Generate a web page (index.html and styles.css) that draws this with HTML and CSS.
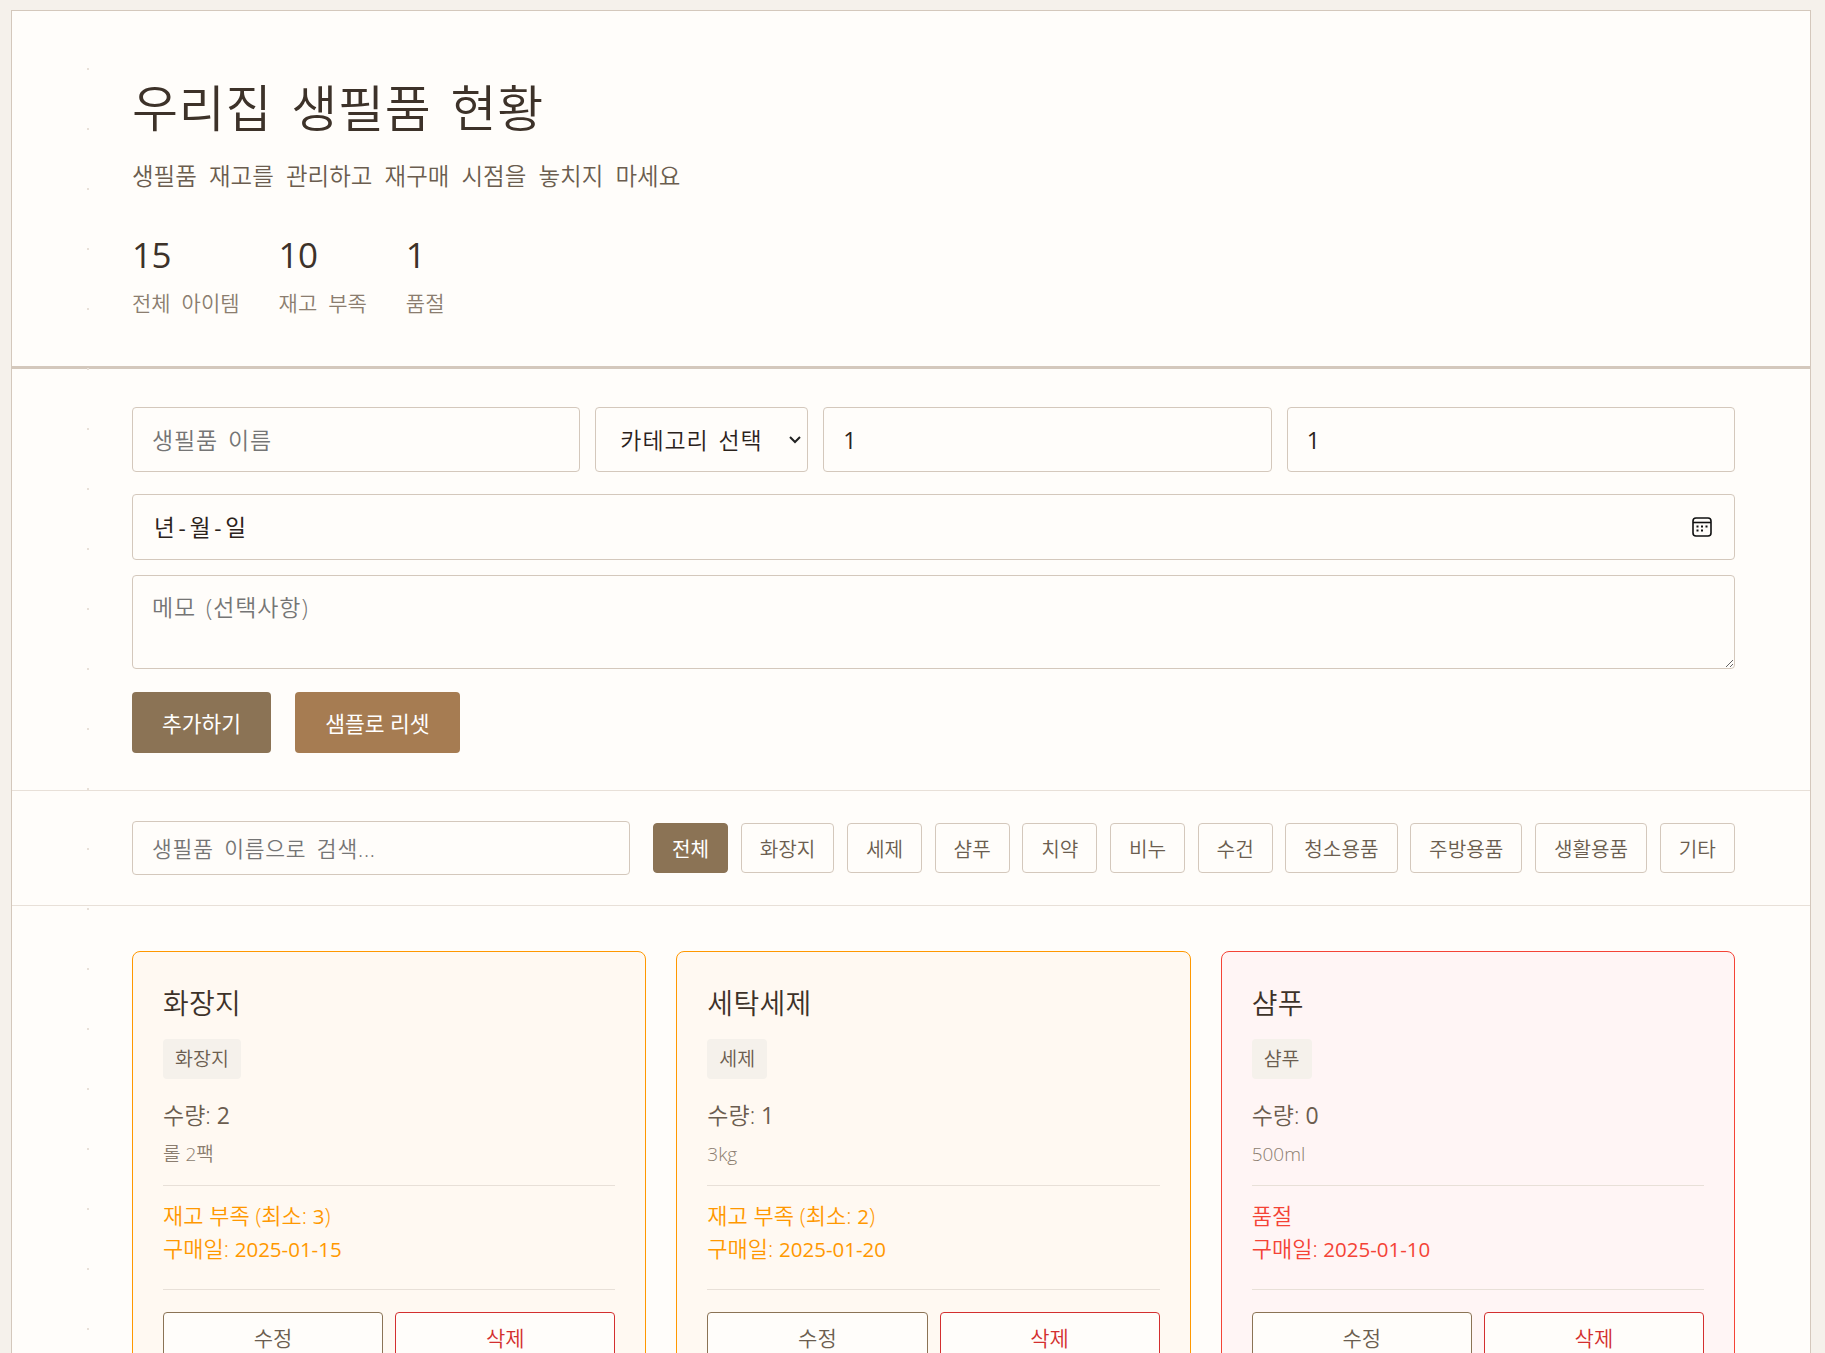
FILE: index.html
```html
<!DOCTYPE html>
<html lang="ko">
<head>
  <meta charset="UTF-8">
  <meta name="viewport" content="width=device-width, initial-scale=1.0">
  <title>우리집 생필품 현황</title>
  <link rel="stylesheet" href="styles.css">
</head>
<body>
  <div class="container">
    <header class="header">
      <h1>우리집 생필품 현황</h1>
      <p class="subtitle">생필품 재고를 관리하고 재구매 시점을 놓치지 마세요</p>
      <div class="stats">
        <div class="stat"><div class="stat-num">15</div><div class="stat-label">전체 아이템</div></div>
        <div class="stat"><div class="stat-num">10</div><div class="stat-label">재고 부족</div></div>
        <div class="stat"><div class="stat-num">1</div><div class="stat-label">품절</div></div>
      </div>
    </header>

    <section class="form">
      <div class="form-row">
        <input type="text" class="field" placeholder="생필품 이름">
        <select class="field field-select">
          <option>카테고리 선택</option>
        </select>
        <input type="number" class="field field-num" value="1">
        <input type="number" class="field field-num" value="1">
      </div>
      <div class="field field-date">
        <span class="date-text">년 - 월 - 일</span>
        <svg class="cal-icon" width="20" height="20" viewBox="0 0 20 20" fill="none" stroke="#111" stroke-width="1.6">
          <rect x="1" y="1" width="18" height="18" rx="3"/>
          <path d="M1 5.5h18"/>
          <path d="M4.5 9.5h2M9 9.5h2M13.5 9.5h2M4.5 13.5h2M9 13.5h2" stroke-width="2"/>
        </svg>
      </div>
      <textarea class="field field-memo" placeholder="메모 (선택사항)"></textarea>
      <div class="form-btns">
        <button type="button" class="btn btn-add">추가하기</button>
        <button type="button" class="btn btn-reset">샘플로 리셋</button>
      </div>
    </section>

    <section class="toolbar">
      <input type="text" class="search" placeholder="생필품 이름으로 검색...">
      <div class="filters">
        <button type="button" class="chip active">전체</button>
        <button type="button" class="chip">화장지</button>
        <button type="button" class="chip">세제</button>
        <button type="button" class="chip">샴푸</button>
        <button type="button" class="chip">치약</button>
        <button type="button" class="chip">비누</button>
        <button type="button" class="chip">수건</button>
        <button type="button" class="chip">청소용품</button>
        <button type="button" class="chip">주방용품</button>
        <button type="button" class="chip">생활용품</button>
        <button type="button" class="chip">기타</button>
      </div>
    </section>

    <section class="cards">
      <article class="card low">
        <h3>화장지</h3>
        <span class="tag">화장지</span>
        <p class="qty">수량: <span class="num">2</span></p>
        <p class="unit">롤 2팩</p>
        <div class="status">
          <p>재고 부족 (최소: <span class="num">3</span>)</p>
          <p>구매일: <span class="num">2025-01-15</span></p>
        </div>
        <div class="actions">
          <button type="button" class="act">수정</button>
          <button type="button" class="act del">삭제</button>
        </div>
      </article>

      <article class="card low">
        <h3>세탁세제</h3>
        <span class="tag">세제</span>
        <p class="qty">수량: <span class="num">1</span></p>
        <p class="unit">3kg</p>
        <div class="status">
          <p>재고 부족 (최소: <span class="num">2</span>)</p>
          <p>구매일: <span class="num">2025-01-20</span></p>
        </div>
        <div class="actions">
          <button type="button" class="act">수정</button>
          <button type="button" class="act del">삭제</button>
        </div>
      </article>

      <article class="card out">
        <h3>샴푸</h3>
        <span class="tag">샴푸</span>
        <p class="qty">수량: <span class="num">0</span></p>
        <p class="unit">500ml</p>
        <div class="status">
          <p>품절</p>
          <p>구매일: <span class="num">2025-01-10</span></p>
        </div>
        <div class="actions">
          <button type="button" class="act">수정</button>
          <button type="button" class="act del">삭제</button>
        </div>
      </article>
    </section>
  </div>
</body>
</html>
```

FILE: styles.css
```css
* {
  box-sizing: border-box;
}

html, body {
  height: 100%;
  overflow: hidden;
}

body {
  margin: 0;
  padding: 10px 14px 0 11px;
  background-color: #f5f1eb;
  color: #3d3229;
  font-family: "Open Sans", "Noto Sans CJK KR", sans-serif;
  font-weight: 350;
}

.container {
  position: relative;
  background: #fffdfa;
  border: 1px solid #d4c8bc;
  min-height: 1500px;
}

/* faint dots down the left side */
.container::before {
  content: "";
  position: absolute;
  top: 0;
  bottom: 0;
  left: 75px;
  width: 2px;
  background: repeating-linear-gradient(to bottom, transparent 0 57px, #e8e0d8 57px 59px, transparent 59px 60px);
}

.header {
  padding: 62px 75px 48px 120px;
  border-bottom: 3px solid #d4c8bc;
}

h1 {
  margin: 0;
  font-size: 50px;
  font-weight: 350;
  line-height: 70px;
  letter-spacing: 0.8px;
  word-spacing: 5px;
  color: #3d3229;
}

.subtitle {
  margin: 16px 0 0;
  font-size: 23.5px;
  line-height: 34px;
  word-spacing: 6px;
  color: #6b5d4f;
}

.stats {
  display: flex;
  gap: 39px;
  margin-top: 38px;
}

.stat-num {
  font-size: 35px;
  font-weight: 400;
  line-height: 48px;
  letter-spacing: -0.5px;
  color: #3d3229;
}

.stat-label {
  margin-top: 9px;
  font-size: 21px;
  line-height: 30px;
  word-spacing: 5.5px;
  color: #8b7d6f;
}

.form {
  padding: 38px 75px 37px 120px;
  border-bottom: 1px solid #e8e0d8;
}

.form-row {
  display: flex;
  gap: 15px;
  margin-bottom: 22px;
}

.field {
  flex: 1;
  min-width: 0;
  padding: 0 19px;
  height: 65px;
  background: #fffdfa;
  border: 1px solid #d4c8bc;
  border-radius: 4px;
  color: #2b221b;
  font: inherit;
  font-size: 23px;
  letter-spacing: 0.9px;
  word-spacing: 3px;
}

.field::placeholder,
.search::placeholder {
  color: #757575;
}

.field-num {
  font-weight: 400;
}

.field-select {
  flex: 0 0 213px;
  padding: 0 20px 0 24px;
  appearance: none;
  background-image: url("data:image/svg+xml,%3Csvg xmlns='http://www.w3.org/2000/svg' width='14' height='9' viewBox='0 0 14 9'%3E%3Cpath d='M2 2l5 5 5-5' fill='none' stroke='%23222' stroke-width='2'/%3E%3C/svg%3E");
  background-repeat: no-repeat;
  background-position: right 5px center;
}

.field-date {
  display: flex;
  align-items: center;
  justify-content: space-between;
  margin-bottom: 15px;
  padding: 0 22px 0 21px;
  height: 66px;
  font-size: 22.5px;
  font-weight: 400;
  letter-spacing: 0;
  word-spacing: -2px;
}

.date-text {
  padding-bottom: 2px;
}

.field-memo {
  display: block;
  width: 100%;
  height: 94px;
  padding: 13px 19px 14px;
  margin-bottom: 23px;
  resize: vertical;
}

.form-btns {
  display: flex;
  gap: 24px;
}

.btn {
  height: 61px;
  padding: 0 30px;
  border: none;
  border-radius: 4px;
  color: #fff;
  font: inherit;
  font-size: 21.5px;
  font-weight: 400;
}

.btn-add {
  background: #8b7355;
}

.btn-reset {
  background: #a67c52;
}

.toolbar {
  display: flex;
  align-items: center;
  gap: 23px;
  padding: 30px 75px 30px 120px;
  border-bottom: 1px solid #e8e0d8;
}

.search {
  flex: 0 0 498px;
  height: 54px;
  padding: 0 19px;
  background: #fffdfa;
  border: 1px solid #d4c8bc;
  border-radius: 4px;
  font: inherit;
  font-size: 21.5px;
  letter-spacing: 0.8px;
  word-spacing: 4px;
}

.filters {
  flex: 1;
  display: flex;
  justify-content: space-between;
}

.chip {
  height: 50px;
  padding: 0 18px;
  background: #fffdfa;
  border: 1px solid #d4c8bc;
  border-radius: 4px;
  color: #6b5d4f;
  font: inherit;
  font-size: 20.2px;
}

.chip.active {
  background: #8b7355;
  border-color: #8b7355;
  color: #fff;
  font-weight: 400;
}

.cards {
  display: grid;
  grid-template-columns: repeat(3, 1fr);
  gap: 30px;
  padding: 45px 75px 0 120px;
}

.card {
  padding: 32px 30px 30px;
  border: 1px solid;
  border-radius: 8px;
}

.card.low {
  background: #fff9f2;
  border-color: #ff9800;
}

.card.out {
  background: #fff5f5;
  border-color: #f44336;
}

.card h3 {
  margin: 0 0 16px;
  font-size: 28px;
  font-weight: 350;
  line-height: 39px;
  letter-spacing: 0.3px;
  color: #3d3229;
}

.tag {
  display: block;
  width: fit-content;
  padding: 6px 12px;
  background: #f5f1eb;
  border-radius: 4px;
  color: #6b5d4f;
  font-size: 19.5px;
  line-height: 28px;
}

.qty {
  margin: 20px 0 0;
  font-size: 23px;
  line-height: 32px;
  color: #6b5d4f;
}

.qty .num {
  font-weight: 400;
}

.unit {
  margin: 10px 0 0;
  font-size: 19px;
  line-height: 27px;
  color: #8b7d6f;
}

.status {
  margin-top: 17px;
  padding: 13px 0 24px;
  border-top: 1px solid #e8e0d8;
  border-bottom: 1px solid #e8e0d8;
  font-size: 22px;
  line-height: 33px;
}

.status p {
  margin: 0;
}

.status .num {
  font-size: 20.5px;
  font-weight: 400;
  line-height: 1;
}

.low .status {
  color: #ff9800;
}

.out .status {
  color: #f44336;
}

.actions {
  display: flex;
  gap: 12px;
  margin-top: 22px;
}

.act {
  flex: 1;
  height: 50px;
  background: #fffdfa;
  border: 1px solid #8b7355;
  border-radius: 4px;
  color: #6b5d4f;
  font: inherit;
  font-size: 21px;
}

.act.del {
  border-color: #d32f2f;
  color: #d32f2f;
}
```
